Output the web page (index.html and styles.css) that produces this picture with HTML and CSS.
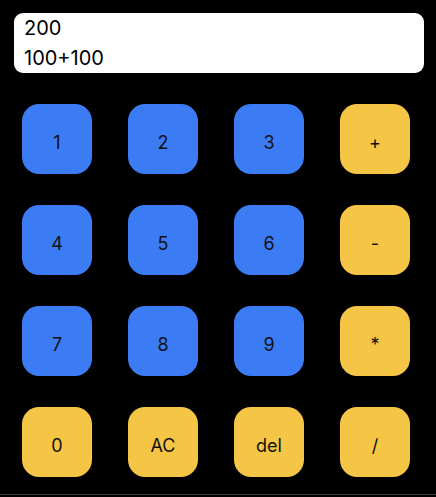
FILE: index.html
```html
<!DOCTYPE html>
<html>
<head>
<meta charset="utf-8">
<link rel="stylesheet" href="styles.css">
</head>
<body>
<div class="calc">
  <div class="display">
    <div class="line">200</div>
    <div class="line">100+100</div>
  </div>
  <div class="keys">
    <button class="key num">1</button>
    <button class="key num">2</button>
    <button class="key num">3</button>
    <button class="key op">+</button>
    <button class="key num">4</button>
    <button class="key num">5</button>
    <button class="key num">6</button>
    <button class="key op">-</button>
    <button class="key num">7</button>
    <button class="key num">8</button>
    <button class="key num">9</button>
    <button class="key op">*</button>
    <button class="key op">0</button>
    <button class="key op">AC</button>
    <button class="key op">del</button>
    <button class="key op">/</button>
  </div>
</div>
<div class="bottom-line"></div>
</body>
</html>
```
FILE: styles.css
```css
html, body {
  margin: 0;
  padding: 0;
  background: #000;
  height: 100%;
}
body {
  font-family: Inter, "Liberation Sans", sans-serif;
  position: relative;
}
.calc {
  padding: 13px 12px 0 14px;
}
.display {
  background: #fff;
  border-radius: 9px;
  height: 60px;
  padding-left: 10px;
  color: #000;
  font-size: 20px;
  line-height: 30px;
}
.keys {
  display: grid;
  grid-template-columns: repeat(4, 70px);
  grid-auto-rows: 70px;
  column-gap: 36px;
  row-gap: 31px;
  margin-top: 31px;
  padding-left: 8px;
}
.key {
  border: none;
  border-radius: 17px;
  font-family: Inter, "Liberation Sans", sans-serif;
  font-size: 18px;
  color: #111;
  padding: 0;
  padding-top: 7px;
}
.num { background: #3b7cf5; }
.op { background: #f5c546; }
.bottom-line {
  position: absolute;
  left: 0;
  right: 0;
  bottom: 2px;
  height: 1px;
  background: #3a3a3a;
}
```
